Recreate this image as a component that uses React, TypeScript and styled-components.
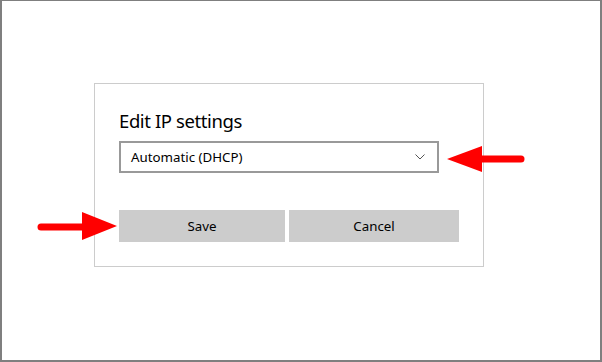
import { createGlobalStyle, styled } from "styled-components";

const GlobalStyle = createGlobalStyle`
  html, body {
    margin: 0;
    padding: 0;
    background: #ffffff;
  }
  * {
    box-sizing: border-box;
  }
`;

const Frame = styled.div`
  position: relative;
  width: 602px;
  height: 362px;
  border: 2px solid #7f7f7f;
  border-top-width: 1px;
  padding: 82px 0 0 92px;
  background: #ffffff;
  font-family: "Segoe UI", "Noto Sans", "Open Sans", sans-serif;
  color: #000000;
`;

const Dialog = styled.div`
  width: 390px;
  height: 184px;
  border: 1px solid #cccccc;
  padding: 24px 24px 0 24px;
  display: flex;
  flex-direction: column;
`;

const Title = styled.h2`
  margin: 0 0 7px 0;
  font-size: 18.5px;
  line-height: 26px;
  font-weight: 400;
  letter-spacing: -0.4px;
`;

const Select = styled.div`
  width: 320px;
  height: 32px;
  border: 2px solid #999999;
  display: flex;
  align-items: center;
  justify-content: space-between;
  padding: 0 12px 0 10px;
  font-size: 13.3px;
`;

const Chevron = styled.svg`
  width: 10px;
  height: 6px;
`;

const Actions = styled.div`
  display: grid;
  grid-template-columns: 166px 170px;
  gap: 4px;
  margin-top: 37px;
`;

const Button = styled.button`
  height: 32px;
  border: none;
  background: #cccccc;
  font-family: inherit;
  font-size: 13.3px;
  color: #000000;
  padding: 0;
`;

const Arrow = styled.svg<{ $left: number; $top: number }>`
  position: absolute;
  left: ${(p) => p.$left}px;
  top: ${(p) => p.$top}px;
  overflow: visible;
`;

export default function App() {
  return (
    <>
      <GlobalStyle />
      <Frame>
        <Dialog>
          <Title>Edit IP settings</Title>
          <Select>
            <span>Automatic (DHCP)</span>
            <Chevron viewBox="0 0 10 6">
              <polyline
                points="0.5,0.5 5,5 9.5,0.5"
                fill="none"
                stroke="#555555"
                strokeWidth="1"
              />
            </Chevron>
          </Select>
          <Actions>
            <Button>Save</Button>
            <Button>Cancel</Button>
          </Actions>
        </Dialog>

        {/* annotation arrows */}
        <Arrow $left={443} $top={143} width="82" height="30" viewBox="0 0 82 30">
          <line
            x1="36"
            y1="15"
            x2="76"
            y2="15"
            stroke="#ff0000"
            strokeWidth="7"
            strokeLinecap="round"
          />
          <polygon points="2,15 37,2 37,28" fill="#ff0000" />
        </Arrow>
        <Arrow $left={32} $top={210} width="86" height="32" viewBox="0 0 86 32">
          <line
            x1="7"
            y1="16"
            x2="52"
            y2="16"
            stroke="#ff0000"
            strokeWidth="7"
            strokeLinecap="round"
          />
          <polygon points="48,1 48,29 83,15" fill="#ff0000" />
        </Arrow>
      </Frame>
    </>
  );
}
